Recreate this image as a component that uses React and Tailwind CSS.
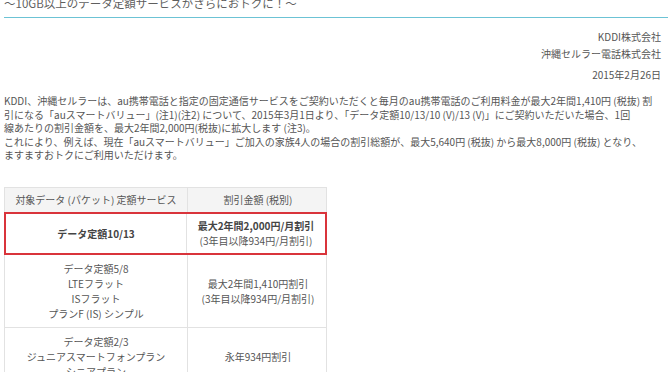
import React from "react";

const lines = [
  "KDDI、沖縄セルラーは、au携帯電話と指定の固定通信サービスをご契約いただくと毎月のau携帯電話のご利用料金が最大2年間1,410円 (税抜) 割",
  "引になる「auスマートバリュー」(注1)(注2) について、2015年3月1日より、「データ定額10/13/10 (V)/13 (V)」にご契約いただいた場合、1回",
  "線あたりの割引金額を、最大2年間2,000円(税抜)に拡大します (注3)。",
  "これにより、例えば、現在「auスマートバリュー」ご加入の家族4人の場合の割引総額が、最大5,640円 (税抜) から最大8,000円 (税抜) となり、",
  "ますますおトクにご利用いただけます。",
];

const rows = [
  {
    left: ["データ定額5/8", "LTEフラット", "ISフラット", "プランF (IS) シンプル"],
    right: ["最大2年間1,410円割引", "(3年目以降934円/月割引)"],
  },
  {
    left: ["データ定額2/3", "ジュニアスマートフォンプラン", "シニアプラン"],
    right: ["永年934円割引"],
  },
];

export default function App() {
  return (
    <div className="w-[672px] h-[372px] overflow-hidden bg-white px-[4px] text-[#555] font-['Noto_Sans_CJK_JP',sans-serif]">
      <h2 className="-mt-[5px] text-[11.5px] leading-[16px] text-[#5f5f5f]">
        ～10GB以上のデータ定額サービスがさらにおトクに！～
      </h2>
      <div className="mt-[6px] h-px bg-[#6cc3d5]" />

      <div className="mt-[10px] pr-[7px] text-right text-[10px] leading-[17px]">
        <p>KDDI株式会社</p>
        <p>沖縄セルラー電話株式会社</p>
        <p className="mt-[4px]">2015年2月26日</p>
      </div>

      <p className="mt-[11px] text-[10px] leading-[13.5px] whitespace-nowrap">
        {lines.map((l, i) => (
          <React.Fragment key={i}>
            {l}
            <br />
          </React.Fragment>
        ))}
      </p>

      <div className="mt-[25px] w-[323px] text-[10px] leading-[15px] text-center">
        <div className="grid grid-cols-[183px_140px] h-[25px] bg-[#f4f4f4] border border-b-0 border-[#e2e2e2]">
          <div className="flex items-center justify-center border-r border-[#e2e2e2]">
            対象データ (パケット) 定額サービス
          </div>
          <div className="flex items-center justify-center">割引金額 (税別)</div>
        </div>

        <div className="grid grid-cols-[181px_138px] h-[43px] border-2 border-[#d9343b]">
          <div className="flex items-center justify-center border-r border-[#e2e2e2] font-bold text-[#444]">
            データ定額10/13
          </div>
          <div className="flex flex-col items-center justify-center">
            <p className="font-bold text-[#444]">最大2年間2,000円/月割引</p>
            <p>(3年目以降934円/月割引)</p>
          </div>
        </div>

        {rows.map((r, i) => (
          <div
            key={i}
            className="grid grid-cols-[183px_140px] border border-t-0 border-[#e2e2e2]"
          >
            <div className="flex flex-col items-center justify-center py-[6px] border-r border-[#e2e2e2]">
              {r.left.map((t) => (
                <p key={t}>{t}</p>
              ))}
            </div>
            <div className="flex flex-col items-center justify-center">
              {r.right.map((t) => (
                <p key={t}>{t}</p>
              ))}
            </div>
          </div>
        ))}
      </div>
    </div>
  );
}
